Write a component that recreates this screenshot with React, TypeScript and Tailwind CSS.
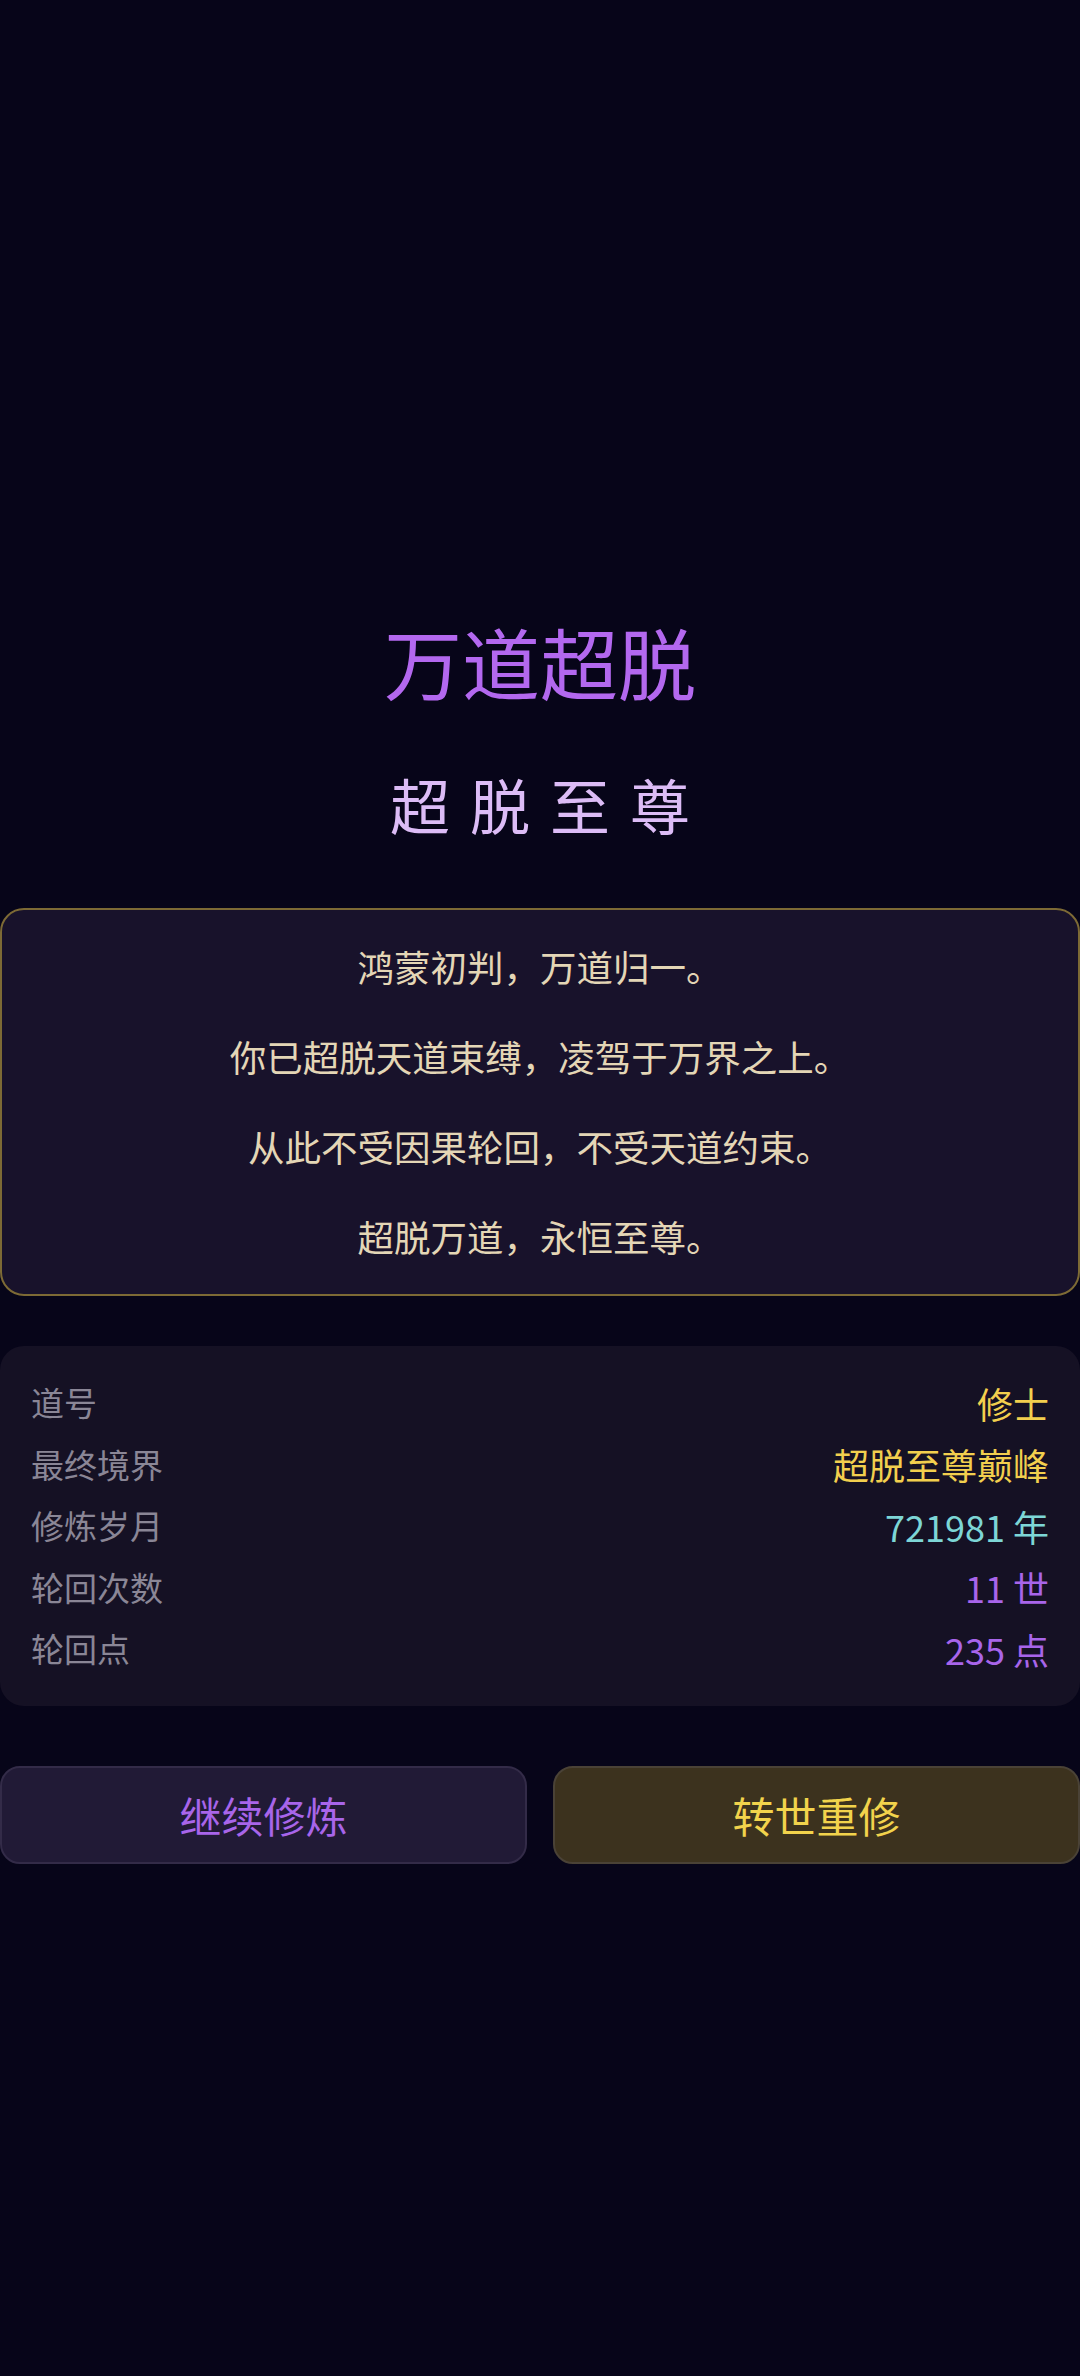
const stats = [
  { label: "道号", value: "修士", color: "text-[#f2cf4e]" },
  { label: "最终境界", value: "超脱至尊巅峰", color: "text-[#f2cf4e]" },
  { label: "修炼岁月", value: "721981 年", color: "text-[#7dd6d6]" },
  { label: "轮回次数", value: "11 世", color: "text-[#a865ea]" },
  { label: "轮回点", value: "235 点", color: "text-[#a865ea]" },
];

const lines = [
  "鸿蒙初判，万道归一。",
  "你已超脱天道束缚，凌驾于万界之上。",
  "从此不受因果轮回，不受天道约束。",
  "超脱万道，永恒至尊。",
];

const App = () => (
  <div
    className="min-h-screen bg-[#070519] pt-[622px]"
    style={{ fontFamily: '"Noto Sans CJK SC", "Noto Sans", sans-serif' }}
  >
    {/* Title */}
    <h1 className="text-center text-[78px] leading-[78px] text-[#b368ef]">万道超脱</h1>
    <p className="mt-[74px] pl-[20px] text-center text-[60px] leading-[60px] tracking-[20px] text-[#dcbcf6]">
      超脱至尊
    </p>

    {/* Ending text */}
    <div className="mt-[74px] flex flex-col gap-[36px] rounded-[24px] border-2 border-[#7d6a35] bg-[#18122b] py-[30px]">
      {lines.map((line) => (
        <p key={line} className="text-center text-[36.5px] leading-[54px] text-[#e4d6b6]">
          {line}
        </p>
      ))}
    </div>

    {/* Stats */}
    <div className="mt-[50px] flex flex-col gap-3 rounded-[24px] bg-[#151124] px-[31px] py-8">
      {stats.map((s) => (
        <div key={s.label} className="flex h-[49.5px] items-center justify-between">
          <span className="text-[33px] text-[#8a8696]">{s.label}</span>
          <span className={`text-[36px] ${s.color}`}>{s.value}</span>
        </div>
      ))}
    </div>

    {/* Actions */}
    <div className="mt-[60px] grid grid-cols-2 gap-[26px]">
      <button className="h-[98px] rounded-[20px] border-2 border-[#332b48] bg-[#211a36] text-[42px] text-[#a865ea]">
        继续修炼
      </button>
      <button className="h-[98px] rounded-[20px] border-2 border-[#4a4236] bg-[#3c321e] text-[42px] text-[#f2d34c]">
        转世重修
      </button>
    </div>
  </div>
);

export default App;
